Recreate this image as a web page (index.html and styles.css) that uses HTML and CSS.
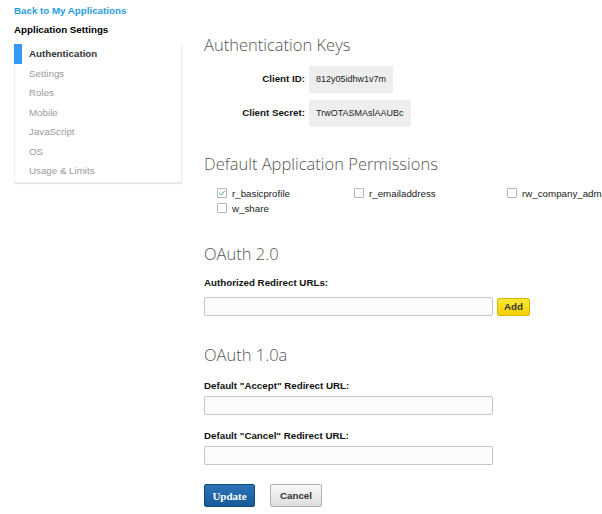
FILE: index.html
```html
<!DOCTYPE html>
<html>
<head>
<meta charset="utf-8">
<link rel="stylesheet" href="styles.css">
</head>
<body>
<div class="page">
  <aside class="sidebar">
    <a class="back" href="#">Back to My Applications</a>
    <div class="side-title">Application Settings</div>
    <ul class="nav">
      <li class="active">Authentication</li>
      <li>Settings</li>
      <li>Roles</li>
      <li>Mobile</li>
      <li>JavaScript</li>
      <li>OS</li>
      <li>Usage &amp; Limits</li>
    </ul>
  </aside>
  <main class="main">
    <h2 class="h h-first">Authentication Keys</h2>
    <div class="keys">
      <div class="key-row">
        <span class="key-label">Client ID:</span>
        <span class="key-value">812y05idhw1v7m</span>
      </div>
      <div class="key-row">
        <span class="key-label">Client Secret:</span>
        <span class="key-value">TrwOTASMAslAAUBc</span>
      </div>
    </div>

    <h2 class="h h-perm">Default Application Permissions</h2>
    <div class="perms">
      <label class="perm"><span class="cb checked"><svg viewBox="0 0 8 8" width="8" height="8"><path d="M1.2 4.1 L3.1 5.9 L6.8 1.9" fill="none" stroke="#5a8fc8" stroke-width="1"/></svg></span>r_basicprofile</label>
      <label class="perm"><span class="cb"></span>r_emailaddress</label>
      <label class="perm"><span class="cb"></span>rw_company_admin</label>
      <label class="perm"><span class="cb"></span>w_share</label>
    </div>

    <h2 class="h h-oauth2">OAuth 2.0</h2>
    <div class="field-label fl-oauth2">Authorized Redirect URLs:</div>
    <div class="input-row">
      <div class="input"></div>
      <button class="btn-add">Add</button>
    </div>

    <h2 class="h h-oauth1">OAuth 1.0a</h2>
    <div class="field-label fl-accept">Default "Accept" Redirect URL:</div>
    <div class="input input-tight"></div>
    <div class="field-label fl-cancel">Default "Cancel" Redirect URL:</div>
    <div class="input input-tight"></div>

    <div class="actions">
      <button class="btn-update">Update</button>
      <button class="btn-cancel">Cancel</button>
    </div>
  </main>
</div>
</body>
</html>
```

FILE: styles.css
```css
html, body {
  margin: 0;
  padding: 0;
  background: #fff;
  overflow: hidden;
}
body {
  font-family: "Liberation Sans", Arial, sans-serif;
  font-size: 9.75px;
  color: #222;
}
.page {
  display: flex;
  align-items: flex-start;
  width: 602px;
}
.sidebar {
  width: 168px;
  margin-left: 14px;
  flex: none;
}
.back {
  display: block;
  margin-top: 4px;
  color: #1f9ce4;
  font-weight: bold;
  line-height: 13px;
  text-decoration: none;
}
.side-title {
  margin-top: 6px;
  font-weight: bold;
  line-height: 13px;
  color: #000;
}
.nav {
  list-style: none;
  margin: 8px 0 0;
  padding: 0 0 1px;
  border: 1px solid #eeeeee;
  border-left-color: #f2f2f2;
  border-top: none;
  box-shadow: 0 1px 1px rgba(0,0,0,0.1);
}
.nav li {
  height: 19.5px;
  line-height: 19.5px;
  padding-left: 14px;
  color: #9a9a9a;
}
.nav li.active {
  color: #333;
  font-weight: bold;
  border-left: 8px solid #3399f3;
  margin-left: -1px;
  padding-left: 7px;
  line-height: 20px;
}
.main {
  margin-left: 22px;
  flex: 1;
  min-width: 0;
}
.h {
  font-family: "Open Sans", sans-serif;
  font-weight: 300;
  font-size: 16.5px;
  color: #555;
  margin: 0;
  line-height: 22px;
  white-space: nowrap;
}
.h-first { margin-top: 34px; }
.keys {
  margin-top: 10px;
  display: flex;
  flex-direction: column;
  gap: 7px;
}
.key-row {
  display: flex;
  align-items: center;
}
.key-label {
  width: 101px;
  text-align: right;
  font-weight: bold;
  color: #111;
  margin-right: 4px;
  position: relative;
  top: -1px;
}
.key-value {
  background: #eeeeee;
  padding: 0 7px;
  height: 27px;
  line-height: 27px;
  font-size: 9px;
  color: #222;
}
.h-perm { margin-top: 26px; }
.perms {
  margin-top: 11px;
  margin-left: 13px;
  display: grid;
  grid-template-columns: 137px 153px 200px;
  row-gap: 1px;
}
.perm {
  display: flex;
  align-items: center;
  height: 14px;
  color: #222;
  white-space: nowrap;
}
.cb {
  width: 8px;
  height: 8px;
  border: 1px solid #b5b5b5;
  border-radius: 1px;
  margin-right: 5px;
  display: inline-flex;
  align-items: center;
  justify-content: center;
  background: #fff;
  flex: none;
}
.cb svg { display: block; }
.h-oauth2 { margin-top: 28px; }
.field-label {
  font-weight: bold;
  color: #111;
  line-height: 12px;
}
.fl-oauth2 { margin-top: 12px; }
.input-row {
  display: flex;
  align-items: center;
  gap: 4px;
  margin-top: 8px;
}
.input {
  width: 287px;
  height: 17px;
  border: 1px solid #c4c4c4;
  border-radius: 2px;
  background: #fcfcfc;
}
.input-tight { margin-top: 4px; }
.btn-add {
  height: 18px;
  width: 33px;
  padding: 0;
  border: 1px solid #d8b700;
  border-radius: 2px;
  background: linear-gradient(#fce83a, #f5cf00);
  font-family: "Liberation Sans", Arial, sans-serif;
  font-weight: bold;
  font-size: 9.75px;
  color: #333;
}
.h-oauth1 { margin-top: 28px; }
.fl-accept { margin-top: 14px; }
.fl-cancel { margin-top: 15px; }
.actions {
  display: flex;
  gap: 15px;
  margin-top: 19px;
}
.btn-update {
  width: 51px;
  height: 23px;
  padding: 0;
  border: 1px solid #0e4a80;
  border-radius: 2px;
  background: linear-gradient(#2b73b6, #165a99);
  color: #fff;
  font-family: "Liberation Serif", "Times New Roman", serif;
  font-weight: bold;
  font-size: 11px;
}
.btn-cancel {
  width: 52px;
  height: 23px;
  padding: 0;
  border: 1px solid #b0b0b0;
  border-radius: 2px;
  background: linear-gradient(#f8f8f8, #dedede);
  color: #333;
  font-family: "Liberation Sans", Arial, sans-serif;
  font-weight: bold;
  font-size: 9.75px;
}
```
